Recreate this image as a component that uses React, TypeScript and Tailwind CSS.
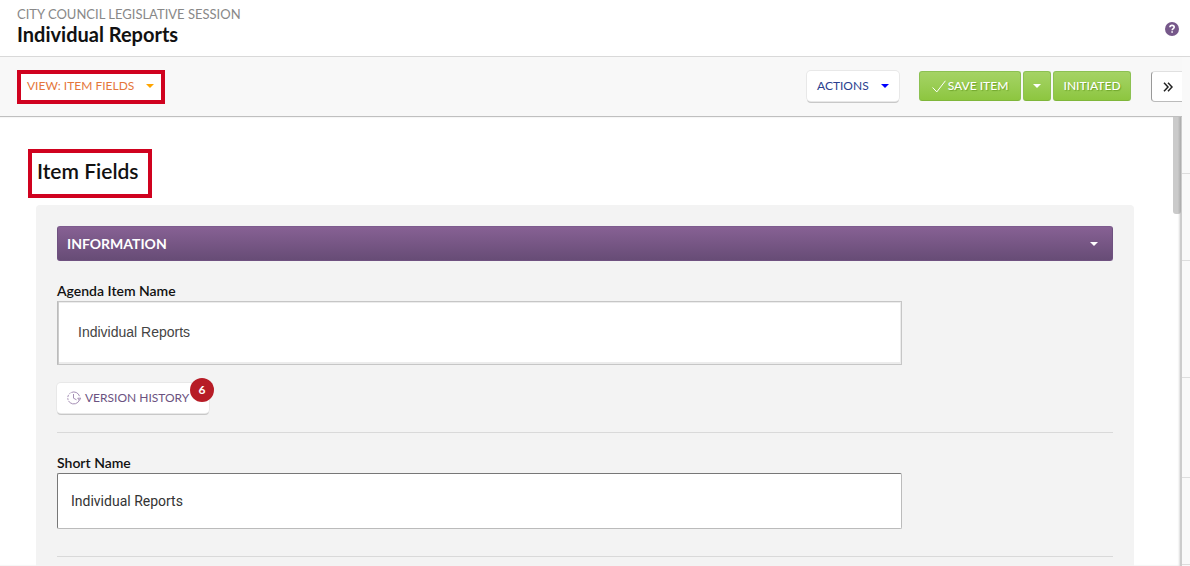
import { ReactNode } from 'react'
import { clsx } from 'clsx'

function Caret({ className }: { className?: string }) {
  return (
    <svg viewBox="0 0 8 4" className={clsx('h-1 w-2 shrink-0', className)} fill="currentColor" aria-hidden="true">
      <path d="M0 0h8L4 4z" />
    </svg>
  )
}

function GreenButton({ children, className, label }: { children: ReactNode; className?: string; label?: string }) {
  return (
    <button
      type="button"
      aria-label={label}
      className={clsx(
        'flex h-[30px] items-center justify-center rounded-[3px] border border-[#8cc152] border-b-[#7fb63a] bg-linear-to-b from-[#a5d365] to-[#8dc63f] text-[12px] leading-5 font-medium text-white [text-shadow:1px_1px_1px_#6fa52b]',
        className,
      )}
    >
      {children}
    </button>
  )
}

const railCells = ['h-[117px]', 'h-[87px]', 'h-[117px]', 'h-[100px]', 'h-[87px]']

export default function App() {
  return (
    <div className="flex h-screen flex-col overflow-hidden bg-white font-['Lato',sans-serif] text-[#111]">
      <header className="flex h-[57px] shrink-0 items-center justify-between border-b border-[#d9d9d9] pr-[11px] pl-[17px]">
        <div className="pb-2">
          <p className="text-[13px] leading-5 text-[#888]">CITY COUNCIL LEGISLATIVE SESSION</p>
          <h1 className="text-[20px] leading-5 font-bold">Individual Reports</h1>
        </div>
        <button type="button" aria-label="Help" className="mt-0.5 text-[#76588a]">
          <svg viewBox="0 0 14 14" className="size-3.5" aria-hidden="true">
            <circle cx="7" cy="7" r="7" fill="currentColor" />
            <path d="M4.9 5.3C5 4.1 5.8 3.4 7 3.4c1.3 0 2.2.7 2.2 1.8 0 1.4-2 1.4-2 3" fill="none" stroke="#fff" strokeWidth="1.6" />
            <path d="M6.3 9.2h1.6v1.6H6.3z" fill="#fff" />
          </svg>
        </button>
      </header>

      <div className="flex min-h-0 flex-1">
        <div className="flex min-w-0 flex-1 flex-col">
          <div className="flex h-[60px] shrink-0 items-start border-b border-[#bfbfbf] bg-[#f8f8f8] pt-[13px] pl-[17px]">
            <button
              type="button"
              className="flex h-[34px] w-[148px] items-center justify-between border-4 border-[#d0021f] bg-white pr-[7px] pb-0.5 pl-1.5 text-[12px] leading-5 text-[#e4763a]"
            >
              VIEW: ITEM FIELDS
              <Caret className="text-[#ffa500]" />
            </button>

            <div className="ml-auto flex items-start gap-5 pt-px">
              <button
                type="button"
                className="flex h-[30px] w-[92px] items-center justify-between rounded-[4px] bg-white px-2.5 text-[12px] leading-5 text-[#2a3f8f] shadow-[0_0_0_1px_#e8e8e8,0_2px_0_#c8c8c8]"
              >
                ACTIONS
                <Caret className="text-[#0000ff]" />
              </button>
              <div className="flex gap-0.5">
                <GreenButton className="w-[102px] gap-0.5">
                  <svg viewBox="0 0 14 13" className="h-[13px] w-3.5" fill="none" stroke="currentColor" aria-hidden="true">
                    <path d="M.6 7.5l4.2 4.4L13.4.8" />
                  </svg>
                  SAVE ITEM
                </GreenButton>
                <GreenButton className="w-7" label="More save options">
                  <Caret />
                </GreenButton>
                <GreenButton className="w-[78px]">INITIATED</GreenButton>
              </div>
              <button
                type="button"
                aria-label="Collapse panel"
                className="flex h-[31px] w-[31px] items-center justify-center rounded-l-[4px] border border-r-0 border-t-[#e0e0e0] border-b-[#bbb] border-l-[#999] bg-white pl-0.5"
              >
                <svg viewBox="0 0 10 10" className="size-2.5" fill="none" stroke="#222" strokeWidth="1.5" aria-hidden="true">
                  <path d="M1 .8L5 5 1 9.2M5 .8L9 5 5 9.2" />
                </svg>
              </button>
            </div>
          </div>

          <main className="relative min-h-0 flex-1 overflow-hidden pr-12 pl-7 shadow-[inset_-2px_0_0_#ccc,inset_-3px_0_2px_#ddd]">
            <div className="absolute top-0 right-px h-[97px] w-2 rounded-b-[3px] bg-linear-to-r from-[#cacaca] from-60% to-[#aaa]" />

            <h2 className="mt-8 flex h-[49px] w-[124px] items-center border-4 border-[#d0021f] pb-1.5 pl-[5px] text-[21px] leading-6 font-semibold">
              Item Fields
            </h2>

            <section className="mt-[7px] ml-2 h-[600px] rounded-[4px] bg-[#f3f3f3] px-[21px] pt-[21px]">
              <button
                type="button"
                className="flex h-[35px] w-full items-center justify-between rounded-[3px] border border-[#6f5180] border-t-[#7d5b8e] bg-linear-to-b from-[#876194] to-[#674c76] pr-[14px] pl-[9px] text-[14px] leading-5 font-bold text-white"
              >
                INFORMATION
                <Caret />
              </button>

              <div className="border-b border-[#d9d9d9] pt-5 pb-[18px]">
                <label htmlFor="agenda-item-name" className="block text-[14px] leading-5 font-semibold">
                  Agenda Item Name
                </label>
                <input
                  id="agenda-item-name"
                  defaultValue="Individual Reports"
                  className="block h-16 w-[80%] border border-[#c6c6c6] border-l-[#bbb] bg-white px-5 pb-0.5 font-['Liberation_Sans',sans-serif] text-[14px] leading-5 text-[#444] shadow-[inset_1px_0_0_#ccc,inset_-1px_-2px_0_#ececec,inset_0_1px_0_#ececec]"
                />
                <button
                  type="button"
                  className="relative mt-[18px] mb-px flex h-[30px] w-[152px] items-center gap-1 rounded-[4px] bg-white pl-2.5 text-[12px] leading-5 text-[#6b5280] shadow-[0_0_0_1px_#e8e8e8,0_2px_0_#c8c8c8]"
                >
                  <svg viewBox="0 0 14 14" className="size-3.5" fill="none" stroke="#a58fb5" aria-hidden="true">
                    <path d="M12.5 5.2A6 6 0 1 0 12.4 9" strokeDasharray="10 1 2 1 2 1 2 1 30" />
                    <path d="M6.5 3v4.2l3 1.6M10.7 7.2l1.7 2 1.5-2z" />
                  </svg>
                  VERSION HISTORY
                  <span className="absolute -top-[5px] -right-[5px] flex size-6 items-center justify-center rounded-full bg-[#b71c26] font-bold text-white">
                    6
                  </span>
                </button>
              </div>

              <div className="border-b border-[#d9d9d9] pt-5 pb-[27px]">
                <label htmlFor="short-name" className="block text-[14px] leading-5 font-semibold">
                  Short Name
                </label>
                <input
                  id="short-name"
                  defaultValue="Individual Reports"
                  className="block h-14 w-[80%] rounded-[2px] border border-[#bbb] border-t-[#777] border-l-[#777] bg-white px-[13px] font-['Roboto',sans-serif] text-[14px] leading-5 text-[#333]"
                />
              </div>
            </section>
          </main>
        </div>

        <aside className="w-2 shrink-0 overflow-hidden bg-[#f9f9f9]">
          {railCells.map((height, index) => (
            <div key={index} className={clsx('border-b border-[#ddd]', height)} />
          ))}
        </aside>
      </div>
    </div>
  )
}
